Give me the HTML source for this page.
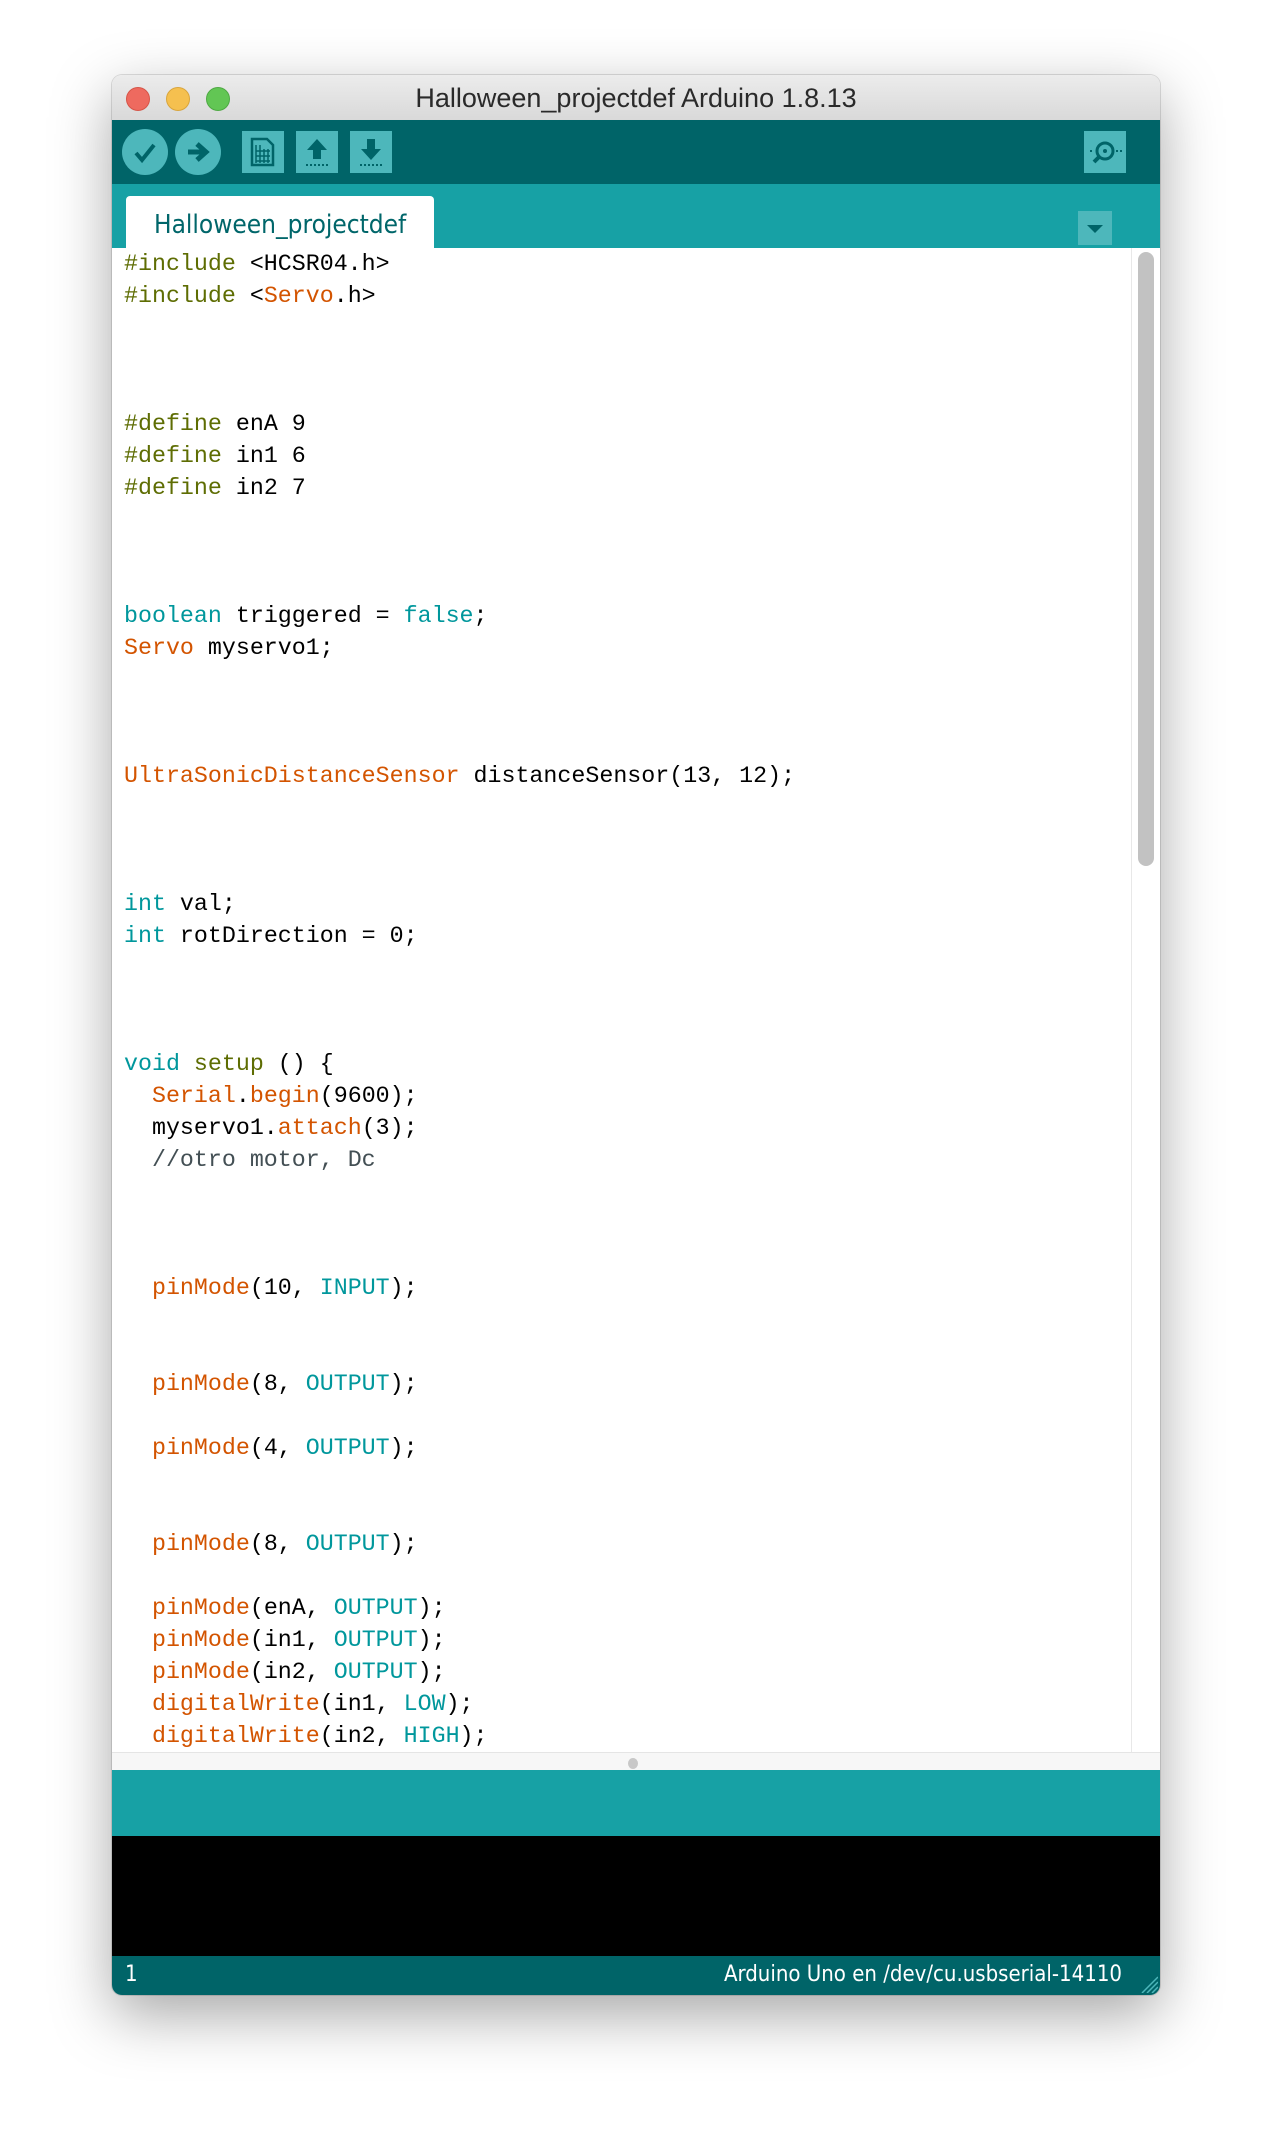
<!DOCTYPE html>
<html><head><meta charset="utf-8"><style>
html,body{margin:0;padding:0;background:#fff;width:1272px;height:2144px;overflow:hidden}
.win{position:absolute;left:112px;top:75px;width:1048px;height:1920px;border-radius:10px;overflow:hidden;box-shadow:0 20px 60px rgba(0,0,0,.35),0 0 0 1px rgba(0,0,0,.12);background:#fff}
.title{position:absolute;left:0;top:0;width:100%;height:45px;background:linear-gradient(#ececec,#d9d9d9);border-bottom:1px solid #c0c0c0;font:27px "Liberation Sans",sans-serif;color:#2a2a2a;text-align:center;line-height:46px}
.dot{position:absolute;top:12px;width:22px;height:22px;border-radius:50%}
.tb{position:absolute;left:0;top:45px;width:100%;height:64px;background:#006468}
.strip{position:absolute;left:0;top:109px;width:100%;height:64px;background:#17a1a5}
.c{position:absolute;width:46px;height:46px;border-radius:50%;background:#4db7bb;top:9px}
.sq{position:absolute;top:11px;width:42px;height:42px;background:#4db7bb}
.tab{position:absolute;left:14px;top:12px;width:308px;height:52px;background:#fff;border-radius:4px 4px 0 0;font:26px "DejaVu Sans Condensed","Liberation Sans",sans-serif;color:#00666a;line-height:58px;padding-left:28px;box-sizing:border-box}
.code{position:absolute;left:0;top:173px;width:1019px;height:1504px;overflow:hidden}
pre{margin:0;padding:0 0 0 12px;font:23.3px "Liberation Mono",monospace;line-height:32px;color:#000}
.o{color:#5e6d03}.t{color:#00979c}.r{color:#d35400}.g{color:#434f54}
.sb{position:absolute;left:1019px;top:173px;width:29px;height:1504px;background:#fff;border-left:1px solid #e8e8e8}
.thumb{position:absolute;left:6px;top:4px;width:16px;height:614px;border-radius:8px;background:#c2c2c2}
.div{position:absolute;left:0;top:1677px;width:100%;height:18px;background:#f7f7f7;border-top:1px solid #e5e5e5}
.msg{position:absolute;left:0;top:1695px;width:100%;height:66px;background:#17a1a5}
.con{position:absolute;left:0;top:1761px;width:100%;height:120px;background:#000}
.st{position:absolute;left:0;top:1881px;width:100%;height:39px;background:#006468;color:#fff;font:22px "DejaVu Sans Condensed","Liberation Sans",sans-serif;line-height:38px}
</style></head><body>
<div class="win">
 <div class="title">Halloween_projectdef Arduino 1.8.13
  <div class="dot" style="left:14px;background:#ee6a5f;border:1px solid #d65548"></div>
  <div class="dot" style="left:54px;background:#f5c04f;border:1px solid #d9a53c"></div>
  <div class="dot" style="left:94px;background:#62c654;border:1px solid #4ea943"></div>
 </div>
 <div class="tb">
  <div class="c" style="left:10px"><svg width="46" height="46"><path d="M14 24 L20 31 L32 16" stroke="#006468" stroke-width="4" fill="none"/></svg></div>
  <div class="c" style="left:63px"><svg width="46" height="46"><path d="M13 23 H28 M22 15 L31 23 L22 31" stroke="#006468" stroke-width="5" fill="none"/></svg></div>
  <div class="sq" style="left:130px"><svg width="42" height="42"><path d="M10 8 H25 L31 14 V34 H10 Z" fill="none" stroke="#006468" stroke-width="2.5"/><path d="M14 14v18M18 14v18M22 18v14M26 18v14M14 20h14M14 25h14M14 30h14" stroke="#006468" stroke-width="1.5"/></svg></div>
  <div class="sq" style="left:184px"><svg width="42" height="42"><path d="M21 8 L31 19 H25 V28 H17 V19 H11 Z" fill="#006468"/><path d="M10 34 H32" stroke="#006468" stroke-width="2" stroke-dasharray="2 2"/></svg></div>
  <div class="sq" style="left:238px"><svg width="42" height="42"><path d="M21 29 L31 18 H25 V8 H17 V18 H11 Z" fill="#006468"/><path d="M10 34 H32" stroke="#006468" stroke-width="2" stroke-dasharray="2 2"/></svg></div>
  <div class="sq" style="left:972px"><svg width="42" height="42"><circle cx="21" cy="20" r="8" fill="none" stroke="#006468" stroke-width="3"/><circle cx="21" cy="20" r="2" fill="#006468"/><path d="M15 26 L10 31" stroke="#006468" stroke-width="4"/><path d="M6 20h3M32 20h6" stroke="#006468" stroke-width="2" stroke-dasharray="2 2"/></svg></div>
 </div>
 <div class="strip">
  <div class="tab">Halloween_projectdef</div>
  <div style="position:absolute;left:966px;top:27px;width:34px;height:34px;background:#4db7bb"><svg width="34" height="34"><path d="M9 14 H25 L17 22 Z" fill="#006468"/></svg></div>
 </div>
 <div class="code"><pre><span class="o">#include</span> &lt;HCSR04.h&gt;
<span class="o">#include</span> &lt;<span class="r">Servo</span>.h&gt;



<span class="o">#define</span> enA 9
<span class="o">#define</span> in1 6
<span class="o">#define</span> in2 7



<span class="t">boolean</span> triggered = <span class="t">false</span>;
<span class="r">Servo</span> myservo1;



<span class="r">UltraSonicDistanceSensor</span> distanceSensor(13, 12);



<span class="t">int</span> val;
<span class="t">int</span> rotDirection = 0;



<span class="t">void</span> <span class="o">setup</span> () {
  <span class="r">Serial</span>.<span class="r">begin</span>(9600);
  myservo1.<span class="r">attach</span>(3);
  <span class="g">//otro motor, Dc</span>



  <span class="r">pinMode</span>(10, <span class="t">INPUT</span>);


  <span class="r">pinMode</span>(8, <span class="t">OUTPUT</span>);

  <span class="r">pinMode</span>(4, <span class="t">OUTPUT</span>);


  <span class="r">pinMode</span>(8, <span class="t">OUTPUT</span>);

  <span class="r">pinMode</span>(enA, <span class="t">OUTPUT</span>);
  <span class="r">pinMode</span>(in1, <span class="t">OUTPUT</span>);
  <span class="r">pinMode</span>(in2, <span class="t">OUTPUT</span>);
  <span class="r">digitalWrite</span>(in1, <span class="t">LOW</span>);
  <span class="r">digitalWrite</span>(in2, <span class="t">HIGH</span>);
</pre></div>
 <div class="sb"><div class="thumb"></div></div>
 <div class="div"><div style="position:absolute;left:516px;top:5px;width:10px;height:11px;border-radius:50%;background:#c8c8c8"></div></div>
 <div class="msg"></div>
 <div class="con"></div>
 <div class="st"><span style="position:absolute;left:13px">1</span><span style="position:absolute;right:38px">Arduino Uno en /dev/cu.usbserial-14110</span>
  <svg style="position:absolute;right:2px;bottom:2px" width="20" height="20"><path d="M4 20L20 4M9 20L20 9M14 20L20 14" stroke="#4db7bb" stroke-width="1.5"/></svg></div>
</div>
</body></html>
